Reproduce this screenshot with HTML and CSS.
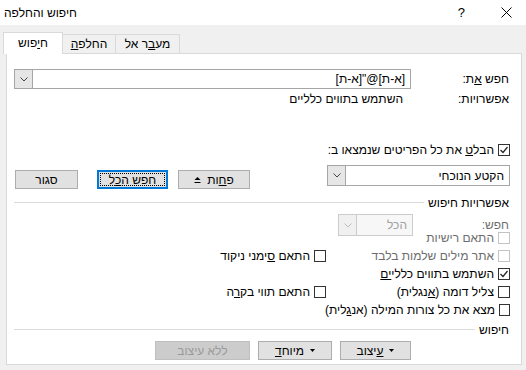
FILE: index.html
```html
<!DOCTYPE html>
<html lang="he">

<head>
    <meta charset="UTF-8">
    <title>חיפוש והחלפה</title>
    <link rel="stylesheet" href="styles.css">
</head>

<body>
    <div class="dialog">
        <div class="titlebar">
            <span class="title">חיפוש והחלפה</span>
            <div class="title-buttons">
                <span class="help">?</span>
                <svg class="close" width="11" height="11" viewBox="0 0 11 11">
                    <path d="M0.5 0.5L10.5 10.5M10.5 0.5L0.5 10.5" stroke="#000" stroke-width="1" fill="none" />
                </svg>
            </div>
        </div>

        <div class="tabs">
            <div class="tab active" dir="rtl">ח<u>י</u>פוש</div>
            <div class="tab" dir="rtl">החלפ<u>ה</u></div>
            <div class="tab" dir="rtl">מע<u>ב</u>ר אל</div>
        </div>

        <div class="panel" dir="rtl">
            <div class="field-row">
                <span class="field-label">חפש <u>א</u>ת:</span>
                <div class="combo">
                    <span class="combo-text"><span>[א-ת]@"[א-ת]</span></span>
                    <span class="combo-arrow">
                        <svg width="8" height="5" viewBox="0 0 8 5">
                            <path d="M0.5 0.5L4 4L7.5 0.5" stroke="#444" stroke-width="1" fill="none" />
                        </svg>
                    </span>
                </div>
            </div>

            <div class="field-row options-row">
                <span class="field-label">אפשרויות:</span>
                <span class="options-value">השתמש בתווים כלליים</span>
            </div>

            <label class="check highlight-check">
                <span class="box checked">
                    <svg width="10" height="10" viewBox="0 0 10 10">
                        <path d="M1.5 5L4 7.5L8.5 2" stroke="#222" stroke-width="1.2" fill="none" />
                    </svg>
                </span>
                <span>הבל<u>ט</u> את כל הפריטים שנמצאו ב:</span>
            </label>

            <div class="scope-row">
                <div class="combo scope-combo">
                    <span class="combo-text"><span>הקטע הנוכחי</span></span>
                    <span class="combo-arrow">
                        <svg width="8" height="5" viewBox="0 0 8 5">
                            <path d="M0.5 0.5L4 4L7.5 0.5" stroke="#444" stroke-width="1" fill="none" />
                        </svg>
                    </span>
                </div>
                <div class="action-buttons">
                    <button class="btn btn-less">
                        <span>פ<u>ח</u>ות</span>
                        <svg width="7" height="7" viewBox="0 0 7 7">
                            <path d="M0.5 4L3.5 1L6.5 4Z" fill="#000" />
                            <path d="M0.5 6.5H6.5" stroke="#000" stroke-width="1" />
                        </svg>
                    </button>
                    <button class="btn btn-find btn-focus"><span class="focus-ring"><span>חפש ה<u>כ</u>ל</span></span></button>
                    <button class="btn btn-close"><span>סגור</span></button>
                </div>
            </div>

            <div class="group-title">
                <span>אפשרויות חיפוש</span>
                <span class="group-line"></span>
            </div>

            <div class="field-row search-row">
                <span class="field-label disabled-text">חפש:</span>
                <div class="combo small-combo disabled">
                    <span class="combo-text"><span>הכל</span></span>
                    <span class="combo-arrow">
                        <svg width="8" height="5" viewBox="0 0 8 5">
                            <path d="M0.5 0.5L4 4L7.5 0.5" stroke="#bbb" stroke-width="1" fill="none" />
                        </svg>
                    </span>
                </div>
            </div>

            <div class="check-grid">
                <label class="check disabled-text"><span class="box disabled-box"></span><span>התאם רישיות</span></label>
                <div></div>
                <label class="check disabled-text"><span class="box disabled-box"></span><span>אתר מילים שלמות בלבד</span></label>
                <label class="check"><span class="box"></span><span>התאם <u>ס</u>ימני ניקוד</span></label>
                <label class="check">
                    <span class="box checked">
                        <svg width="10" height="10" viewBox="0 0 10 10">
                            <path d="M1.5 5L4 7.5L8.5 2" stroke="#222" stroke-width="1.2" fill="none" />
                        </svg>
                    </span>
                    <span>השתמש בתווים כללי<u>ים</u></span>
                </label>
                <div></div>
                <label class="check"><span class="box"></span><span>צליל דומה (<u>א</u>נגלית)</span></label>
                <label class="check"><span class="box"></span><span>התאם תווי בק<u>ר</u>ה</span></label>
                <label class="check"><span class="box"></span><span>מצא את כל צורות המילה (אנ<u>ג</u>לית)</span></label>
                <div></div>
            </div>

            <div class="group-title bottom-title">
                <span>חיפוש</span>
                <span class="group-line"></span>
            </div>

            <div class="format-buttons">
                <button class="btn btn-format">
                    <svg width="5" height="3" viewBox="0 0 5 3"><path d="M0 0H5L2.5 3Z" fill="#000" /></svg>
                    <span><u>ע</u>יצוב</span>
                </button>
                <button class="btn btn-special">
                    <svg width="5" height="3" viewBox="0 0 5 3"><path d="M0 0H5L2.5 3Z" fill="#000" /></svg>
                    <span>מיוח<u>ד</u></span>
                </button>
                <button class="btn btn-noformat" disabled><span>ללא עיצוב</span></button>
            </div>
        </div>
    </div>
</body>

</html>
```

FILE: styles.css
```css
body {
    margin: 0;
    font-family: 'Liberation Sans', 'DejaVu Sans', sans-serif;
    font-size: 12px;
    color: #000;
    background-color: #f0f0f0;
}

.dialog {
    width: 526px;
    height: 370px;
    background-color: #f0f0f0;
    overflow: hidden;
}

.titlebar {
    height: 25px;
    background-color: white;
    display: flex;
    align-items: center;
    justify-content: space-between;
    padding: 0 14px 0 4px;
    box-sizing: border-box;
}

.title {
    font-size: 12px;
}

.title-buttons {
    display: flex;
    align-items: center;
    gap: 36px;
}

.help {
    font-size: 13px;
}

.tabs {
    display: flex;
    align-items: flex-end;
    padding: 6px 0 0 3px;
    height: 28px;
    box-sizing: border-box;
}

.tab {
    height: 19px;
    line-height: 18px;
    box-sizing: border-box;
    border: 1px solid #d9d9d9;
    border-bottom: none;
    border-left: none;
    text-align: center;
    background-color: #f0f0f0;
}

.tab:nth-child(2) {
    width: 53px;
}

.tab:nth-child(3) {
    width: 64px;
}

.tab.active {
    position: relative;
    z-index: 1;
    width: 60px;
    height: 22px;
    line-height: 20px;
    margin-bottom: -1px;
    border-left: 1px solid #d9d9d9;
    background-color: white;
}

.panel {
    margin-left: 6px;
    width: 516px;
    height: 312px;
    box-sizing: border-box;
    background-color: white;
    border: 1px solid #d9d9d9;
    padding: 15px 12px 0 7px;
}

.field-row {
    display: grid;
    grid-template-columns: 98px 1fr;
    align-items: center;
}

.options-row {
    margin-top: 2px;
    height: 16px;
}

.options-value {
    padding-right: 8px;
}

.combo {
    display: flex;
    height: 20px;
    box-sizing: border-box;
    border: 1px solid #a6a6a6;
    background-color: white;
}

.combo-text {
    flex: 1;
    display: flex;
    align-items: center;
    padding-right: 5px;
}

.combo-arrow {
    width: 17px;
    background-color: #e6e6e6;
    border-right: 1px solid #a6a6a6;
    display: flex;
    align-items: center;
    justify-content: center;
}

.check {
    display: flex;
    align-items: center;
    height: 18px;
    white-space: nowrap;
}

.box {
    width: 12px;
    height: 12px;
    box-sizing: border-box;
    border: 1px solid #333;
    background-color: white;
    margin-left: 4px;
    margin-right: -1px;
    display: flex;
    align-items: center;
    justify-content: center;
}

.disabled-box {
    border-color: #c4c4c4;
}

.disabled-text {
    color: #6d6d6d;
}

.highlight-check {
    margin-top: 34px;
}

.scope-row {
    display: flex;
    align-items: flex-start;
    margin-top: 6px;
}

.scope-combo {
    width: 183px;
    height: 21px;
    margin-right: -1px;
}

.action-buttons {
    display: flex;
    margin-right: auto;
    margin-top: 5px;
    margin-left: 1px;
}

.btn {
    height: 19px;
    box-sizing: border-box;
    background-color: #e1e1e1;
    border: 1px solid #adadad;
    font-family: 'Liberation Sans', 'DejaVu Sans', sans-serif;
    font-size: 12px;
    color: #000;
    padding: 0;
    display: flex;
    align-items: center;
    justify-content: center;
    gap: 6px;
}

.btn-less {
    width: 72px;
}

.btn-find {
    width: 71px;
    margin-right: 10px;
}

.btn-close {
    width: 63px;
    margin-right: 19px;
}

.btn-focus {
    border-color: #0078d7;
    box-shadow: inset 0 0 0 1px #0078d7;
    padding: 2px;
}

.focus-ring {
    flex: 1;
    align-self: stretch;
    border: 1px dotted #000;
    display: flex;
    align-items: center;
    justify-content: center;
}

.group-title {
    display: flex;
    align-items: center;
    height: 16px;
    margin-top: 6px;
    gap: 4px;
}

.group-line {
    flex: 1;
    height: 1px;
    background-color: #dcdcdc;
    margin-bottom: 2px;
}

.search-row {
    margin-top: 3px;
    grid-template-columns: 96px 75px;
}

.small-combo {
    height: 22px;
}

.combo.disabled {
    border-color: #cccccc;
    background-color: #f7f7f7;
    color: #a0a0a0;
}

.combo.disabled .combo-arrow {
    background-color: #f0f0f0;
    border-right-color: #cccccc;
}

.check-grid {
    display: grid;
    grid-template-columns: 184px 1fr;
    grid-auto-rows: 18px;
    margin-top: -7px;
}

.bottom-title {
    margin-top: 3px;
}

.format-buttons {
    display: flex;
    gap: 8px;
    margin-top: 3px;
    padding-right: 98px;
}

.btn-format {
    width: 71px;
}

.btn-special {
    width: 74px;
}

.btn-noformat {
    width: 95px;
    background-color: #cccccc;
    border-color: #bfbfbf;
    color: #9a9a9a;
}
```
